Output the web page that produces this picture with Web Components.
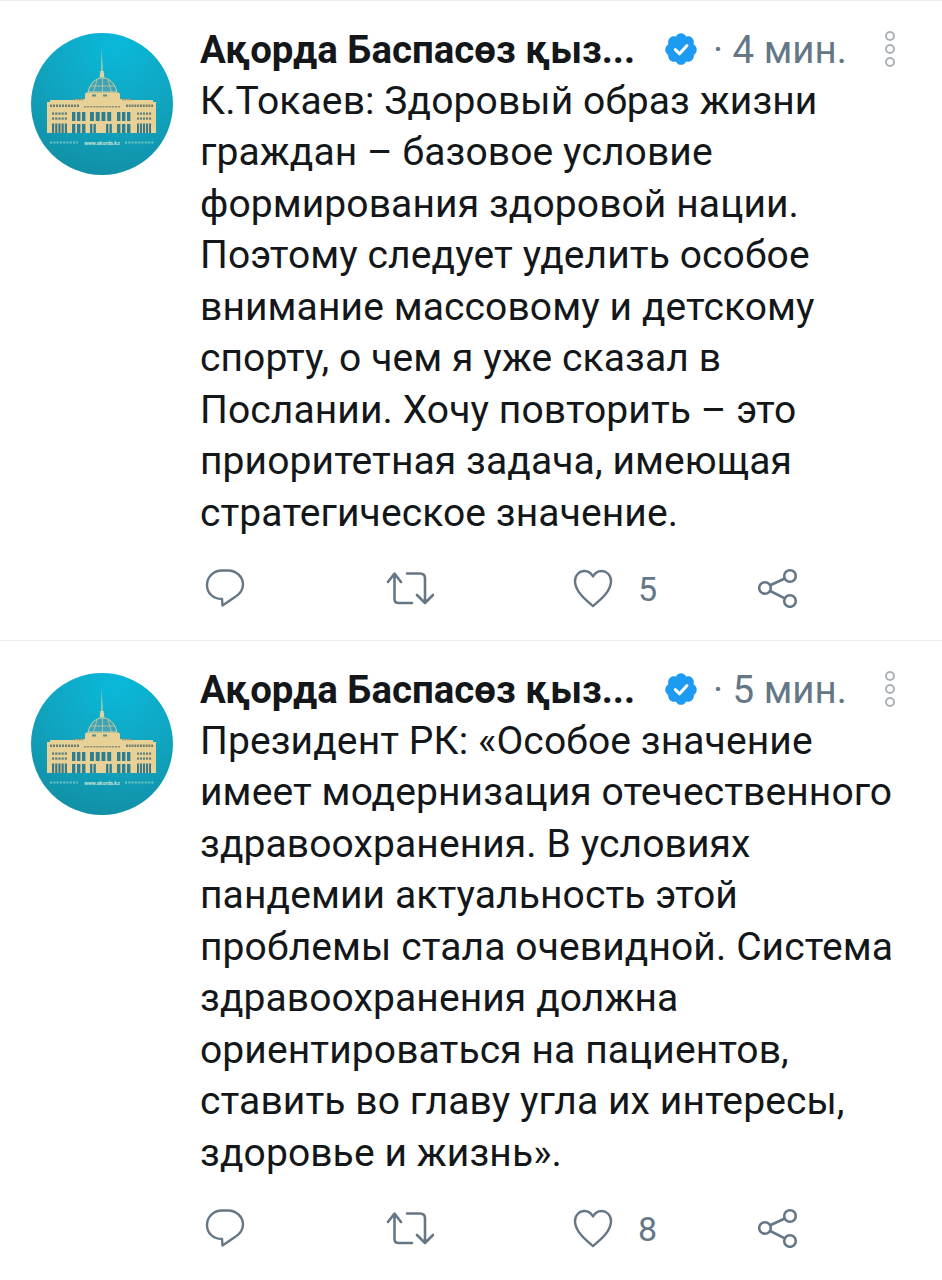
<!DOCTYPE html>
<html>
<head>
<meta charset="utf-8">
<style>
html,body{margin:0;padding:0;background:#fff;}
body{width:942px;height:1280px;overflow:hidden;font-family:Roboto,"Liberation Sans",sans-serif;}
</style>
</head>
<body>
<tweet-card name="Ақорда Баспасөз қыз..." time="4 мин." likes="5">К.Токаев: Здоровый образ жизни<br>граждан – базовое условие<br>формирования здоровой нации.<br>Поэтому следует уделить особое<br>внимание массовому и детскому<br>спорту, о чем я уже сказал в<br>Послании. Хочу повторить – это<br>приоритетная задача, имеющая<br>стратегическое значение.</tweet-card>
<tweet-card name="Ақорда Баспасөз қыз..." time="5 мин." likes="8">Президент РК: «Особое значение<br>имеет модернизация отечественного<br>здравоохранения. В условиях<br>пандемии актуальность этой<br>проблемы стала очевидной. Система<br>здравоохранения должна<br>ориентироваться на пациентов,<br>ставить во главу угла их интересы,<br>здоровье и жизнь».</tweet-card>

<script>
// one column of little windows for the palace drawing
function windowRow(x1, x2, y, h, n, color) {
    let out = ''
    const step = (x2 - x1) / n
    for (let i = 0; i < n; i++) {
        out += `<rect x="${x1 + i * step}" y="${y}" width="${step * 0.68}" height="${h}" fill="${color}"/>`
    }
    return out
}

class PalaceAvatar extends HTMLElement {
    constructor() {
        super()
        this._shadowRoot = this.attachShadow({mode : 'open'})
    }
    connectedCallback(){
        const id = 'g' + Math.random().toString(36).slice(2)
        const dark = '#2f7f92'
        const windows = [
            windowRow(50, 80, 104.500, 2.500, 10, '#6d7f6f'),
            windowRow(84, 121, 106, 1.500, 12, '#8a8f74'),
            windowRow(126, 154, 104.500, 2.500, 10, '#6d7f6f'),
            windowRow(52, 68, 112.500, 2.200, 5, '#5a7f78'),
            windowRow(52, 68, 117.500, 2.200, 5, '#5a7f78'),
            windowRow(52, 68, 123.500, 9.500, 5, '#3d7a85'),
            windowRow(72, 87, 112, 9, 3, dark),
            windowRow(72, 87, 124, 9, 3, dark),
            windowRow(90, 113, 112, 9, 4, dark),
            windowRow(90, 97, 124, 9, 2, dark),
            windowRow(106, 113, 124, 9, 2, dark),
            windowRow(117, 132, 112, 9, 3, dark),
            windowRow(117, 132, 124, 9, 3, dark),
            windowRow(137, 152, 112.500, 2.200, 5, '#5a7f78'),
            windowRow(137, 152, 117.500, 2.200, 5, '#5a7f78'),
            windowRow(137, 152, 123.500, 9.500, 5, '#3d7a85'),
            windowRow(92, 98, 94.500, 2, 1, '#5f8d8a'),
            windowRow(103, 109, 94.500, 2, 1, '#5f8d8a'),
            windowRow(74, 84, 98.500, 1.800, 4, '#7f8c78'),
            windowRow(122, 132, 98.500, 1.800, 4, '#7f8c78')
        ].join('')
        this._shadowRoot.innerHTML = `
        <style>
        :host{display:block;width:142px;height:142px;flex:none;}
        svg{display:block;}
        </style>
        <svg width="142" height="142" viewBox="31 33 142 142">
            <defs><radialGradient id="${id}" cx="0.6" cy="0.08" r="1.05">
                <stop offset="0" stop-color="#0ab9da"/><stop offset="0.55" stop-color="#11a2bd"/><stop offset="1" stop-color="#108a9f"/>
            </radialGradient></defs>
            <circle cx="102" cy="104" r="71" fill="url(#${id})"/>
            <path d="M101.700 48l1 23h.9l.8 6.500h-4.800l.8-6.500h.9z" fill="#dfd2a0"/>
            <path d="M88 92c2-8 7-14 14.500-14s12.500 6 14.500 14z" fill="#3fa3b5" stroke="#d6cf9f" stroke-width="1"/>
            <path d="M102.500 78v14M97 80l-3.500 12M108 80l3.500 12M90 86h25" stroke="#d6cf9f" stroke-width=".7" fill="none"/>
            <path d="M47 102h3v-2h24v-1h11v-5.500h1v-1h33v1h1v5.500h11v1h22v2h3v31H47z" fill="#e8d196"/>
            ${windows}
            <path d="M50 142.500h28M125 142.500h29" stroke="#74c3c6" stroke-width="2.200" stroke-dasharray="2 1.300"/>
            <text x="102" y="144.500" text-anchor="middle" font-family="Roboto,sans-serif" font-size="5.200" font-weight="700" fill="#c9e3d2">www.akorda.kz</text>
        </svg>
        `
    }
}
window.customElements.define('palace-avatar', PalaceAvatar)

const icons = {
    reply: `<path d="M17 31C8 31 2 25 2 17C2 8.500 9 2.500 17 2.500H23C31 2.500 38 8.500 38 16.500C38 22.500 34 26.500 30 29L17.500 37.500Z" fill="none" stroke="currentColor" stroke-width="2.400" stroke-linejoin="round"/>`,
    retweet: `<path d="M2 14L8.500 5.500L15 14M8.500 6V31q0 4 4 4H26M21 5.500H34q5 0 5 5V34M31 27L39 35L47 27" fill="none" stroke="currentColor" stroke-width="2.600" stroke-linecap="round" stroke-linejoin="round"/>`,
    heart: `<path d="M20 38C14 33 2 24 2 13C2 7 6.500 3 11.500 3C15 3 18 5 20 8.500C22 5 25 3 28.500 3C33.500 3 38 7 38 13C38 24 26 33 20 38Z" fill="none" stroke="currentColor" stroke-width="2.400" stroke-linejoin="round"/>`,
    share: `<g fill="none" stroke="currentColor" stroke-width="2.600"><circle cx="7" cy="20" r="5.800"/><circle cx="32" cy="8" r="5.800"/><circle cx="32" cy="33" r="5.800"/><path d="M12.200 17.300L26.800 10.500M12.200 23L26.800 30.300"/></g>`
}

class ActionIcon extends HTMLElement {
    constructor() {
        super()
        this._shadowRoot = this.attachShadow({mode : 'open'})
    }
    connectedCallback(){
        const name = this.getAttribute('name')
        const w = name == 'retweet' ? 48 : 40
        this._shadowRoot.innerHTML = `
        <style>
        :host{display:flex;align-items:center;color:#657786;font-size:34px;height:40px;}
        svg{display:block;flex:none;}
        span{margin-left:25px;padding-top:2px;line-height:40px;}
        </style>
        <svg width="${w}" height="40" viewBox="0 0 ${w} 40">${icons[name]}</svg>
        <span><slot></slot></span>
        `
    }
}
window.customElements.define('action-icon', ActionIcon)

class TweetCard extends HTMLElement {
    constructor() {
        super()
        this._shadowRoot = this.attachShadow({mode : 'open'})
    }
    connectedCallback(){
        this._shadowRoot.innerHTML = `
        <style>
        :host{display:flex;box-sizing:border-box;height:640px;border-top:1px solid #e6ecf0;padding:32px 0 0 31px;font-family:Roboto,"Liberation Sans",sans-serif;color:#14171a;}
        .main{margin-left:27px;flex:1;min-width:0;}
        .head{display:flex;align-items:center;height:38px;margin-top:-3px;}
        .name{font-size:38.400px;font-weight:700;width:463px;flex:none;white-space:nowrap;}
        .badge{width:36px;height:36px;flex:none;}
        .time{font-size:38.500px;color:#657786;margin-left:14px;white-space:nowrap;width:170px;flex:none;}
        .more{flex:none;width:14px;height:38px;}
        .text{margin:7.500px 0 0;font-size:39px;line-height:51.500px;letter-spacing:.1px;white-space:nowrap;}
        .actions{display:flex;margin-top:28.700px;padding-left:5px;color:#657786;}
        action-icon:nth-child(1){width:181px;}
        action-icon:nth-child(2){width:187px;}
        action-icon:nth-child(3){width:185px;}
        </style>
        <palace-avatar></palace-avatar>
        <div class="main">
            <div class="head">
                <div class="name">${this.getAttribute('name')}</div>
                <svg class="badge" viewBox="0 0 24 24"><path fill="#1d9bf0" d="M22.500 12.500c0-1.580-.875-2.950-2.148-3.600.154-.435.238-.905.238-1.400 0-2.210-1.710-3.998-3.818-3.998-.47 0-.92.084-1.336.25C14.818 2.415 13.510 1.500 12 1.500s-2.816.917-3.437 2.250c-.415-.165-.866-.25-1.336-.25-2.110 0-3.818 1.790-3.818 4 0 .494.083.964.237 1.400-1.272.65-2.147 2.018-2.147 3.600 0 1.495.782 2.798 1.942 3.486-.02.17-.032.34-.032.514 0 2.210 1.708 4 3.818 4 .47 0 .92-.086 1.335-.25.620 1.334 1.926 2.250 3.437 2.250 1.512 0 2.818-.916 3.437-2.250.415.163.865.248 1.336.248 2.110 0 3.818-1.790 3.818-4 0-.174-.012-.344-.033-.513 1.158-.687 1.943-1.990 1.943-3.484z"/><path fill="none" stroke="#fff" stroke-width="2" stroke-linecap="round" stroke-linejoin="round" d="M8.200 12.400l2.800 2.800 5-5.500"/></svg>
                <div class="time">· ${this.getAttribute('time')}</div>
                <svg class="more" viewBox="0 0 14 38"><g fill="none" stroke="#aab2b9" stroke-width="2"><circle cx="7" cy="6" r="4"/><circle cx="7" cy="19" r="4"/><circle cx="7" cy="32" r="4"/></g></svg>
            </div>
            <div class="text"><slot></slot></div>
            <div class="actions">
                <action-icon name="reply"></action-icon>
                <action-icon name="retweet"></action-icon>
                <action-icon name="heart">${this.getAttribute('likes')}</action-icon>
                <action-icon name="share"></action-icon>
            </div>
        </div>
        `
    }
}
window.customElements.define('tweet-card', TweetCard)
</script>
</body>
</html>
